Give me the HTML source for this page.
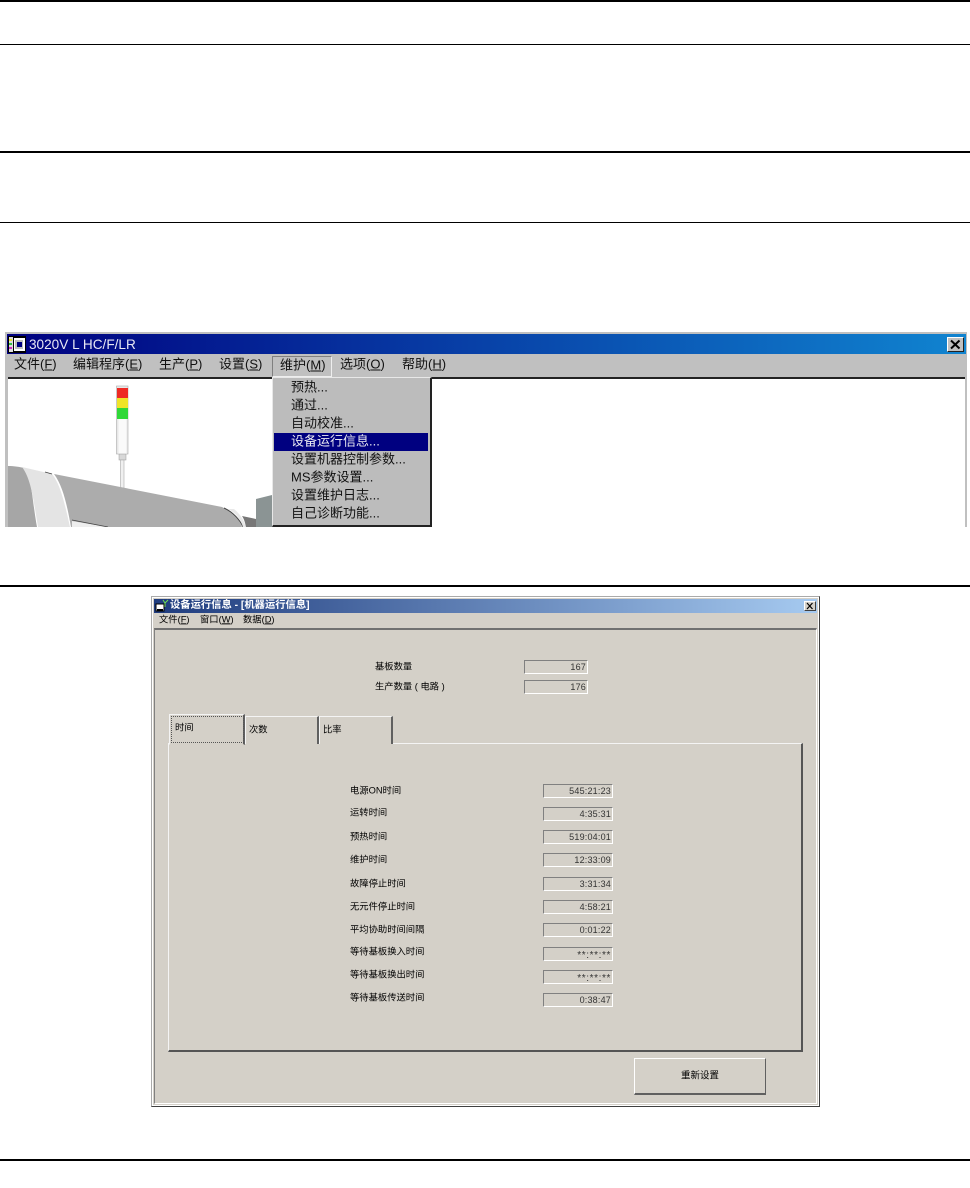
<!DOCTYPE html>
<html lang="zh">
<head>
<meta charset="utf-8">
<title>设备运行信息</title>
<style>
html,body{margin:0;padding:0;background:#fff;}
body{position:relative;width:970px;height:1188px;overflow:hidden;font-family:"Liberation Sans","Noto Sans CJK SC",sans-serif;color:#000;}
div,span{position:absolute;box-sizing:border-box;}
u{text-decoration:underline;}
.hr{left:0;width:970px;background:#000;}
.t{white-space:nowrap;line-height:1;}
.m{font-size:13px;color:#111;transform:translateY(-50%);filter:blur(.25px);}
.d{font-size:13px;color:#111;left:291px;transform:translateY(-50%);filter:blur(.25px);}
.l{font-size:9.3px;left:350px;color:#000;transform:translateY(-50%);}
.f{background:#d4d0c8;border:1px solid;border-color:#808080 #fff #fff #808080;left:543px;width:70px;height:14px;font-size:9px;line-height:13px;text-align:right;padding-right:1px;letter-spacing:.2px;color:#333;white-space:nowrap;}
.a{line-height:15px;font-size:10px;letter-spacing:.6px;}
.tab{background:#d4d0c8;border-top:1px solid #f4f4f4;border-left:1px solid #f4f4f4;border-right:2px solid #606060;}
.s{font-size:9.3px;color:#000;transform:translateY(-50%);}
</style>
</head>
<body>
<div class="hr" style="top:0;height:2px"></div>
<div class="hr" style="top:44px;height:1px"></div>
<div class="hr" style="top:151px;height:2px"></div>
<div class="hr" style="top:222px;height:1px"></div>
<div class="hr" style="top:585px;height:2px"></div>
<div class="hr" style="top:1159px;height:2px"></div>

<!-- Window 1 -->
<div style="left:5px;top:332px;width:962px;height:195px;background:#c0c0c0;overflow:hidden">
  <div style="left:2px;top:2px;width:959px;height:20px;background:linear-gradient(90deg,#000080,#1084d0)"></div>
  <div style="left:3px;top:45px;width:957px;height:150px;background:#fff;border-top:2px solid #222"></div>
</div>
<svg style="position:absolute;left:8px;top:336px" width="18" height="17" viewBox="0 0 18 17">
  <rect width="18" height="17" fill="#000"/>
  <rect x="1" y="1" width="4" height="15" fill="#ddd"/>
  <rect x="1" y="3" width="3" height="2" fill="#e8e030"/><rect x="1" y="7" width="3" height="2" fill="#30c040"/><rect x="1" y="11" width="3" height="2" fill="#d030c0"/>
  <rect x="6" y="2" width="11" height="13" fill="#fff"/>
  <rect x="7" y="4" width="8" height="9" fill="#c0c0c0"/>
  <rect x="9" y="6" width="5" height="5" fill="#000080"/>
</svg>
<div class="t" style="left:29px;top:338px;font-size:13.600px;color:#e8e8f4;filter:blur(.25px)">3020V L HC/F/LR</div>
<div style="left:947px;top:337px;width:17px;height:15px;background:#c0c0c0;border:1px solid;border-color:#fff #222 #222 #fff"></div>
<svg style="position:absolute;left:947px;top:337px" width="17" height="15" viewBox="0 0 17 15"><path d="M4 3.500L12.500 11.500M12.500 3.500L4 11.500" stroke="#000" stroke-width="2"/></svg>

<div class="t m" style="left:14px;top:364px">文件(<u>F</u>)</div>
<div class="t m" style="left:73px;top:364px">编辑程序(<u>E</u>)</div>
<div class="t m" style="left:159px;top:364px">生产(<u>P</u>)</div>
<div class="t m" style="left:219px;top:364px">设置(<u>S</u>)</div>
<div style="left:272px;top:356px;width:60px;height:21px;border:1px solid;border-color:#808080 #eee #eee #808080"></div>
<div class="t m" style="left:280px;top:365px">维护(<u>M</u>)</div>
<div class="t m" style="left:340px;top:364px">选项(<u>O</u>)</div>
<div class="t m" style="left:402px;top:364px">帮助(<u>H</u>)</div>

<!-- tower and machine -->
<svg style="position:absolute;left:0;top:378px" width="272" height="149" viewBox="0 378 272 149">
  <rect x="116.500" y="386" width="11.500" height="68" fill="#e8e8e8" stroke="#aaa" stroke-width=".6"/>
  <rect x="117" y="388" width="11" height="10" fill="#ee2a24"/>
  <rect x="117" y="398" width="11" height="10" fill="#f0e428"/>
  <rect x="117" y="408" width="11" height="11" fill="#30d838"/>
  <rect x="118.500" y="419" width="8" height="35" fill="#fafafa"/>
  <rect x="119" y="454" width="7" height="6" fill="#d8d8d8" stroke="#999" stroke-width=".5"/>
  <rect x="120.500" y="460" width="3.500" height="28" fill="#f0f0f0" stroke="#aaa" stroke-width=".6"/>
  <path d="M8 527V466C14 466 20 467 24 468C32 476 32 500 37 527Z" fill="#a6a6a6"/>
  <path d="M22 467L52 474C60 484 64 500 70 527H38C34 505 32 480 22 467Z" fill="#e4e4e4"/>
  <path d="M54 474L222 507C232 512 240 520 242 527H71C67 505 63 486 54 474Z" fill="#acacac"/>
  <path d="M72 521L108 527H72Z" fill="#eee"/>
  <path d="M72 520L108 527" stroke="#444" stroke-width=".8"/>
  <path d="M45 472L52 474" stroke="#444" stroke-width=".8"/>
  <path d="M224 508C233 512 240 520 243 527" stroke="#444" stroke-width="1" fill="none"/>
  <path d="M234 509C240 514 244 520 246 527H243C241 520 236 513 228 509Z" fill="#e8e8e8"/>
  <path d="M242 516L256 519V527H246C245 522 244 519 242 516Z" fill="#777"/>
  <path d="M256 499L272 495V527H256Z" fill="#8b9494"/>
</svg>

<!-- dropdown -->
<div style="left:272px;top:377px;width:160px;height:150px;background:#bcbcbc;border-style:solid;border-width:1px 2px 2px 1px;border-color:#e8e8e8 #222 #222 #e8e8e8"></div>
<div style="left:274px;top:433px;width:154px;height:18px;background:#000080"></div>
<div class="t d" style="top:387px">预热...</div>
<div class="t d" style="top:405px">通过...</div>
<div class="t d" style="top:423px">自动校准...</div>
<div class="t d" style="top:441px;color:#e8e8f0">设备运行信息...</div>
<div class="t d" style="top:459px">设置机器控制参数...</div>
<div class="t d" style="top:477px">MS参数设置...</div>
<div class="t d" style="top:495px">设置维护日志...</div>
<div class="t d" style="top:513px">自己诊断功能...</div>

<!-- Window 2 -->
<div style="left:151px;top:596px;width:669px;height:511px;background:#d4d0c8;border:1px solid;border-color:#aaa #404040 #404040 #aaa;box-shadow:inset 1px 1px 0 #fff,inset -1px -1px 0 #fff"></div>
<div style="left:154px;top:599px;width:663px;height:14px;background:linear-gradient(90deg,#1f3c7e,#a6caf0)"></div>
<svg style="position:absolute;left:155px;top:599px" width="15" height="14" viewBox="0 0 15 14">
  <rect x="1" y="5" width="8" height="7" fill="#fff" stroke="#000"/>
  <rect x="2" y="10" width="6" height="2" fill="#000"/>
  <path d="M10 8V3M10 4L8 1M10 4L13 1" stroke="#6fdc50" stroke-width="1" fill="none"/>
</svg>
<div class="t" style="left:170px;top:601px;font-size:10.300px;color:#fff;font-weight:bold">设备运行信息 - [机器运行信息]</div>
<div style="left:804px;top:601px;width:12px;height:10px;background:#d4d0c8;border:1px solid;border-color:#fff #404040 #404040 #fff"></div>
<svg style="position:absolute;left:804px;top:601px" width="12" height="10" viewBox="0 0 12 10"><path d="M3 2L8.500 8M8.500 2L3 8" stroke="#000" stroke-width="1.200"/></svg>
<div class="t s" style="left:159px;top:620px">文件(<u>F</u>)</div>
<div class="t s" style="left:200px;top:620px">窗口(<u>W</u>)</div>
<div class="t s" style="left:243px;top:620px">数据(<u>D</u>)</div>
<div style="left:154px;top:628px;width:663px;height:476px;border-style:solid;border-width:2px 1px 1px 1px;border-color:#707070 #fff #fff #808080"></div>

<div class="t s" style="left:375px;top:667px">基板数量</div>
<div class="t s" style="left:375px;top:687px">生产数量 ( 电路 )</div>
<div class="f" style="left:524px;top:660px;width:64px">167</div>
<div class="f" style="left:524px;top:680px;width:64px">176</div>

<!-- Tabs + panel -->
<div style="left:168px;top:743px;width:635px;height:309px;background:#d4d0c8;border-style:solid;border-width:1px 2px 2px 1px;border-color:#f4f4f4 #555 #555 #f4f4f4"></div>
<div class="tab" style="left:245px;top:716px;width:74px;height:28px"></div>
<div class="tab" style="left:319px;top:716px;width:74px;height:28px"></div>
<div class="tab" style="left:169px;top:714px;width:76px;height:31px;border-bottom:1px solid #d4d0c8"></div>
<div style="left:171px;top:716px;width:73px;height:27px;border:1px dotted #555"></div>
<div class="t s" style="left:175px;top:728px">时间</div>
<div class="t s" style="left:249px;top:730px">次数</div>
<div class="t s" style="left:323px;top:730px">比率</div>

<div class="t l" style="top:790.500px">电源ON时间</div>
<div class="t l" style="top:813px">运转时间</div>
<div class="t l" style="top:837px">预热时间</div>
<div class="t l" style="top:860px">维护时间</div>
<div class="t l" style="top:883.500px">故障停止时间</div>
<div class="t l" style="top:906.500px">无元件停止时间</div>
<div class="t l" style="top:930px">平均协助时间间隔</div>
<div class="t l" style="top:951.500px">等待基板换入时间</div>
<div class="t l" style="top:975px">等待基板换出时间</div>
<div class="t l" style="top:998px">等待基板传送时间</div>

<div class="f" style="top:784px">545:21:23</div>
<div class="f" style="top:807px">4:35:31</div>
<div class="f" style="top:830px">519:04:01</div>
<div class="f" style="top:853px">12:33:09</div>
<div class="f" style="top:877px">3:31:34</div>
<div class="f" style="top:900px">4:58:21</div>
<div class="f" style="top:923px">0:01:22</div>
<div class="f a" style="top:947px">**:**:**</div>
<div class="f a" style="top:970px">**:**:**</div>
<div class="f" style="top:993px">0:38:47</div>

<div style="left:634px;top:1058px;width:132px;height:37px;background:#d4d0c8;border-style:solid;border-width:1px 1px 2px 1px;border-color:#fff #606060 #606060 #fff"></div>
<div class="t s" style="left:681px;top:1076px;font-size:9.500px">重新设置</div>
</body>
</html>
